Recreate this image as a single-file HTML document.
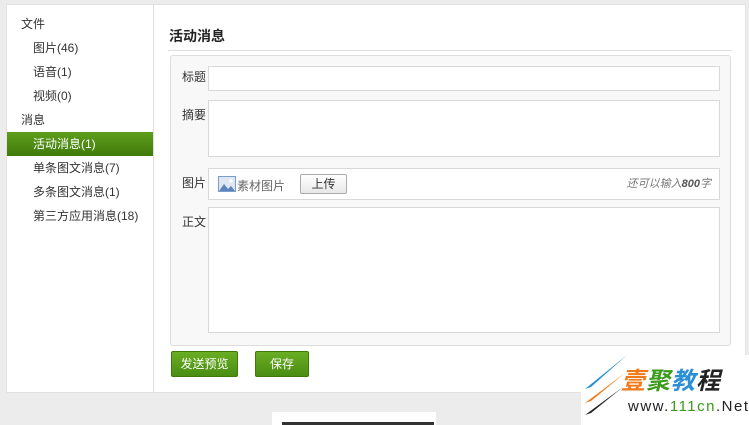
<!DOCTYPE html>
<html><head><meta charset="utf-8"><style>
*{margin:0;padding:0;box-sizing:border-box}
body{width:749px;height:425px;background:#ececec;font-family:"Liberation Sans","Noto Sans CJK SC",sans-serif;font-size:12px;color:#333;position:relative;overflow:hidden}
.panel{position:absolute;left:6px;top:4px;width:740px;height:389px;background:#fff;border:1px solid #e2e2e2}
.side{position:absolute;left:6px;top:4px;width:148px;height:389px;border-right:1px solid #ddd}
.side div{position:absolute;height:24px;line-height:24px;white-space:nowrap}
.act{left:1px;width:146px;background:linear-gradient(#5f9e1c,#3f7a0a);color:#fff}
.ttl{position:absolute;left:169px;top:26px;font-size:14px;font-weight:bold;color:#222}
.line{position:absolute;left:168px;top:50px;width:564px;height:1px;background:#ddd}
.box{position:absolute;left:170px;top:55px;width:561px;height:291px;background:#f8f8f8;border:1px solid #ddd;border-radius:3px}
.lb{position:absolute;left:182px;font-size:12px}
.in{position:absolute;left:208px;width:512px;background:#fff;border:1px solid #d8d8d8}
.btn{position:absolute;top:351px;height:26px;line-height:25px;text-align:center;color:#fff;background:linear-gradient(#6aae24,#4a8d12);border:1px solid #3f7a0a;border-radius:2px}
</style></head><body>
<div class="panel"></div>
<div class="side">
<div style="left:15px;top:8px">文件</div>
<div style="left:27px;top:32px">图片(46)</div>
<div style="left:27px;top:56px">语音(1)</div>
<div style="left:27px;top:80px">视频(0)</div>
<div style="left:15px;top:104px">消息</div>
<div class="act" style="top:128px;padding-left:26px">活动消息(1)</div>
<div style="left:27px;top:152px">单条图文消息(7)</div>
<div style="left:27px;top:176px">多条图文消息(1)</div>
<div style="left:27px;top:200px">第三方应用消息(18)</div>
</div>
<div class="ttl">活动消息</div>
<div class="line"></div>
<div class="box"></div>
<div class="lb" style="top:68px">标题</div>
<div class="in" style="top:66px;height:25px"></div>
<div class="lb" style="top:106px">摘要</div>
<div class="in" style="top:100px;height:57px"></div>
<div class="lb" style="top:174px">图片</div>
<div class="in" style="top:168px;height:32px">
<svg style="position:absolute;left:9px;top:7px" width="18" height="16" viewBox="0 0 18 16"><rect x="0.5" y="0.5" width="17" height="15" fill="#dde6f2" stroke="#7a9cc8"/><path d="M1 15L6 8l4 5 3-3 4 5z" fill="#5b83bf"/><circle cx="13" cy="5" r="1.8" fill="#fff"/></svg>
<span style="position:absolute;left:28px;top:8px;color:#666">素材图片</span>
<span style="position:absolute;left:91px;top:5px;width:47px;height:20px;line-height:18px;text-align:center;border:1px solid #aaa;border-radius:2px;background:linear-gradient(#fff,#e8e8e8)">上传</span>
<span style="position:absolute;right:8px;top:6px;font-size:11px;color:#777;font-style:italic">还可以输入<b style="color:#555">800</b>字</span>
</div>
<div class="lb" style="top:213px">正文</div>
<div class="in" style="top:207px;height:126px"></div>
<div class="btn" style="left:171px;width:67px">发送预览</div>
<div class="btn" style="left:255px;width:54px">保存</div>
<div style="position:absolute;left:272px;top:412px;width:164px;height:13px;background:#fff"></div>
<div style="position:absolute;left:282px;top:422px;width:152px;height:3px;background:#333"></div>
<div style="position:absolute;left:581px;top:355px;width:168px;height:70px;background:#fff"></div>
<svg style="position:absolute;left:583px;top:353px" width="50" height="64" viewBox="0 0 50 64"><path d="M2 36L44 2 8 34z" fill="#2b8fd6"/><path d="M2 50L42 20 8 48z" fill="#f07a1a"/><path d="M2 62L40 34 8 60z" fill="#222"/></svg>
<div style="position:absolute;left:621px;top:367px;font-size:24px;line-height:30px;font-style:italic;font-weight:bold;letter-spacing:1px"><span style="color:#f07a1a">壹</span><span style="color:#3a9a1a">聚</span><span style="color:#2b8fd6">教</span><span style="color:#222">程</span></div>
<div style="position:absolute;left:628px;top:398px;font-size:15px;letter-spacing:1.5px;color:#222">www.<span style="color:#3a9a1a">111cn</span>.Net</div>
</body></html>
